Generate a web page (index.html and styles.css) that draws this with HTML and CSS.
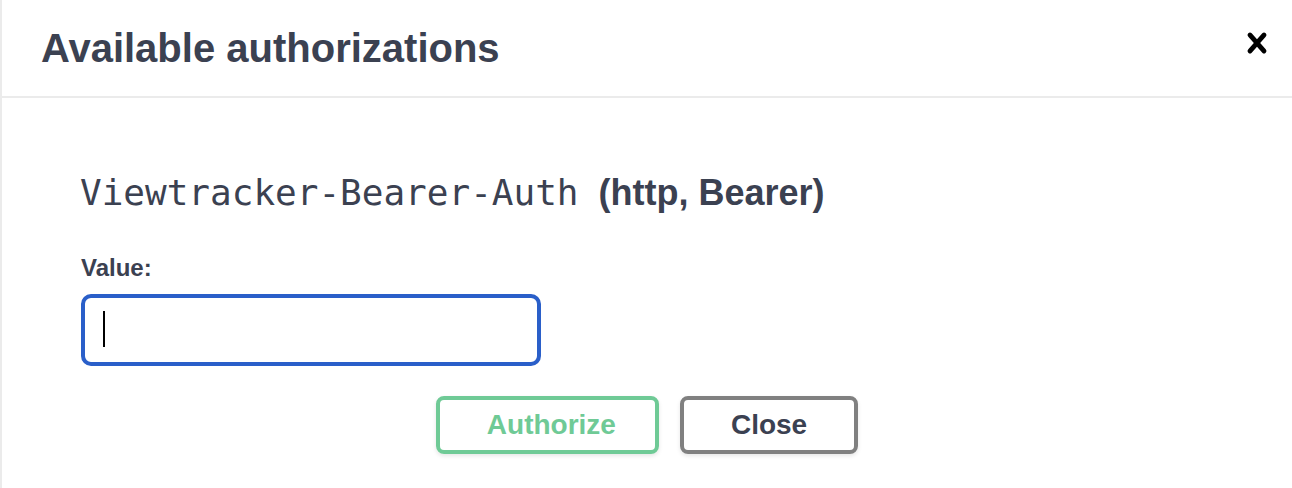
FILE: index.html
```html
<!DOCTYPE html>
<html lang="en">
<head>
    <meta charset="UTF-8">
    <meta name="viewport" content="width=device-width, initial-scale=1.0">
    <title>Available authorizations</title>
    <link rel="stylesheet" href="styles.css">
</head>
<body>
    <div class="modal">
        <div class="modal-header">
            <h3>Available authorizations</h3>
            <button class="close-modal" aria-label="Close">
                <svg viewBox="0 0 20 20" width="40" height="40" fill="currentColor">
                    <path d="M14.348 14.849a1.2 1.2 0 0 1-1.697 0L10 11.819l-2.651 3.029a1.2 1.2 0 1 1-1.697-1.697l2.758-3.15-2.759-3.152a1.2 1.2 0 1 1 1.697-1.697L10 8.183l2.651-3.031a1.2 1.2 0 1 1 1.697 1.697l-2.758 3.152 2.758 3.15a1.2 1.2 0 0 1 0 1.698z"/>
                </svg>
            </button>
        </div>

        <div class="modal-content">
            <form class="auth-container">
                <h4><code>Viewtracker-Bearer-Auth</code>(http, Bearer)</h4>

                <label class="field-label" for="bearerValue">Value:</label>
                <div class="input-wrap">
                    <input id="bearerValue" type="text" class="value-input">
                    <span class="caret"></span>
                </div>

                <div class="auth-btn-wrapper">
                    <button type="button" class="btn authorize">Authorize</button>
                    <button type="button" class="btn close">Close</button>
                </div>
            </form>
        </div>
    </div>
</body>
</html>
```

FILE: styles.css
```css
:root {
    --text-color: #3b4151;
    --border-color: #ebebeb;
    --focus-color: #2a5fc9;
    --authorize-color: #6fca96;
    --close-border: #808080;
}

* {
    margin: 0;
    padding: 0;
    box-sizing: border-box;
}

html, body {
    height: 100%;
}

body {
    font-family: "Liberation Sans", Arial, Helvetica, sans-serif;
    background-color: #ffffff;
    color: var(--text-color);
    overflow: hidden;
}

.modal {
    height: 100%;
    border-left: 2px solid var(--border-color);
}

.modal-header {
    display: flex;
    justify-content: space-between;
    align-items: flex-start;
    padding: 24px 15px 24px 39px;
    border-bottom: 2px solid var(--border-color);
}

.modal-header h3 {
    font-size: 40px;
    font-weight: 700;
    line-height: 48px;
    color: var(--text-color);
}

.close-modal {
    display: flex;
    background: none;
    border: none;
    color: #000000;
    margin-top: -1px;
    cursor: pointer;
}

.modal-content {
    padding: 40px 38px 0;
}

.auth-container {
    padding: 20px 40px 0;
}

.auth-container h4 {
    font-size: 36px;
    font-weight: 700;
    line-height: 44px;
    margin-top: 13px;
    color: var(--text-color);
}

.auth-container h4 code {
    font-family: "DejaVu Sans Mono", "Liberation Mono", monospace;
    font-weight: 400;
    font-size: 36px;
    margin-right: 20px;
}

.field-label {
    display: block;
    margin-top: 39px;
    padding-left: 1px;
    font-size: 24px;
    font-weight: 700;
    line-height: 28px;
}

.input-wrap {
    position: relative;
    width: 460px;
    margin: 12px 0 0 1px;
}

.value-input {
    display: block;
    width: 460px;
    height: 72px;
    border: 4px solid var(--focus-color);
    border-radius: 10px;
    padding: 0 20px;
    font-size: 28px;
    outline: none;
    caret-color: transparent;
}

.caret {
    position: absolute;
    left: 22px;
    top: 17px;
    width: 2px;
    height: 36px;
    background: #000000;
}

.auth-btn-wrapper {
    display: flex;
    justify-content: center;
    gap: 21px;
    padding-top: 30px;
}

.btn {
    font-family: "Liberation Sans", Arial, Helvetica, sans-serif;
    font-size: 28px;
    font-weight: 700;
    line-height: 30px;
    background: transparent;
    border: 4px solid;
    border-radius: 8px;
    box-shadow: 0 2px 4px rgba(0, 0, 0, 0.1);
    cursor: pointer;
}

.btn.authorize {
    color: var(--authorize-color);
    border-color: var(--authorize-color);
    padding: 10px 39px 10px 47px;
}

.btn.close {
    color: var(--text-color);
    border-color: var(--close-border);
    padding: 10px 47px;
}
```
